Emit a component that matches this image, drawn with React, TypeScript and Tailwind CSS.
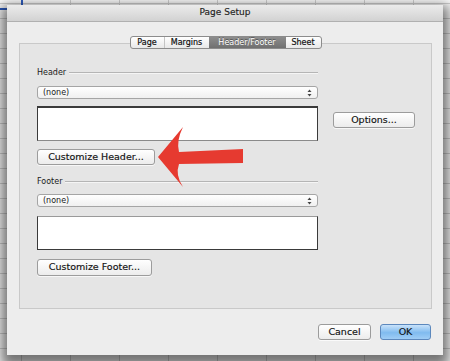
import React from "react"

const font = { fontFamily: '"DejaVu Sans", "Liberation Sans", sans-serif' }

function Button({ label, className = "" }: { label: string; className?: string }) {
  return (
    <div
      className={`flex h-[16px] items-center justify-center rounded-[3px] border border-[#9c9c9c] bg-[linear-gradient(to_bottom,#ffffff,#ececec)] text-[9.5px] text-[#111] [-webkit-text-stroke:0.15px_#111] shadow-[0_1px_0_rgba(255,255,255,0.7)] ${className}`}
    >
      {label}
    </div>
  )
}

function SelectBox() {
  return (
    <div className="flex h-[13px] w-[281px] items-center justify-between rounded-[3px] border border-[#a5a5a5] bg-[linear-gradient(to_bottom,#ffffff,#f0f0f0)] pl-[5px] pr-[5px]">
      <span className="text-[8px] leading-none text-[#1a1a1a]">(none)</span>
      <svg width="5" height="8" viewBox="0 0 5 8">
        <path d="M2.5 0.5 L4.5 3 L0.5 3 Z" fill="#444" />
        <path d="M2.5 7.5 L4.5 5 L0.5 5 Z" fill="#444" />
      </svg>
    </div>
  )
}

function SectionLabel({ label }: { label: string }) {
  return (
    <div className="flex h-[10px] w-[281px] items-center gap-[3px]">
      <span className="text-[8px] leading-none text-[#1a1a1a]">{label}</span>
      <div className="h-[2px] flex-1 border-t border-[#b5b5b5] bg-white/60" />
    </div>
  )
}

function Tabs() {
  const tabs = [
    { label: "Page", w: "w-[33px]" },
    { label: "Margins", w: "w-[45px]" },
    { label: "Header/Footer", w: "w-[77px]", active: true },
    { label: "Sheet", w: "w-[35px]" },
  ]
  return (
    <div className="relative z-10 flex h-[13px] overflow-hidden rounded-[3px] border border-[#8c8c8c] bg-[linear-gradient(to_bottom,#ffffff,#e8e8e8)]">
      {tabs.map((t, i) => (
        <div
          key={t.label}
          className={`flex items-center justify-center text-[8px] leading-none ${t.w} ${
            i > 0 && !t.active && !tabs[i - 1].active ? "border-l border-[#c4c4c4]" : ""
          } ${
            t.active
              ? "bg-[linear-gradient(to_bottom,#8d8d8d,#707070)] text-white [text-shadow:0_-1px_0_rgba(0,0,0,0.4)]"
              : "text-[#111] [-webkit-text-stroke:0.2px_#111]"
          }`}
        >
          {t.label}
        </div>
      ))}
    </div>
  )
}

export default function App() {
  return (
    <div
      className="relative h-[361px] w-[450px] overflow-hidden bg-white bg-[linear-gradient(to_right,#d4d4d4_1px,transparent_1px),linear-gradient(to_bottom,#d4d4d4_1px,transparent_1px)] bg-[length:49px_15px] bg-[position:21px_3px]"
      style={font}
    >
      {/* selected cell */}
      <div className="absolute left-[-30px] top-[-20px] h-[30px] w-[53px] border-b-2 border-r-2 border-[#2f5fc4]" />

      {/* dialog window */}
      <div className="absolute left-[7px] top-[5px] flex h-[350px] w-[436px] flex-col bg-[#ededed] shadow-[0_6px_12px_6px_rgba(0,0,0,0.55)]">
        <div className="flex h-[17px] items-center justify-center border-b border-[#b0b0b0] bg-[linear-gradient(to_bottom,#ebebeb,#d2d2d2)] text-[9px] text-[#222] [-webkit-text-stroke:0.15px_#222]">
          Page Setup
        </div>

        <div className="flex flex-col px-[12px] pt-[14px]">
          <div className="flex justify-center pl-[1px]">
            <Tabs />
          </div>

          <div className="-mt-[6px] flex h-[266px] w-[413px] flex-col border border-[#c9c9c9] bg-[#e5e5e5] pl-[17px] pt-[24px]">
            <SectionLabel label="Header" />
            <div className="mt-[8px]">
              <SelectBox />
            </div>
            <div className="mt-[7px] flex items-start gap-[15px]">
              <div className="h-[35px] w-[281px] border border-[#3a3a3a] border-t-2 border-b-[#8a8a8a] bg-white" />
              <Button label="Options..." className="mt-[6px] w-[82px]" />
            </div>
            <Button label="Customize Header..." className="mt-[8px] w-[118px]" />

            <div className="mt-[12px]">
              <SectionLabel label="Footer" />
            </div>
            <div className="mt-[7px]">
              <SelectBox />
            </div>
            <div className="mt-[9px] h-[34px] w-[281px] border border-[#3a3a3a] border-t-[#9a9a9a] bg-white" />
            <Button label="Customize Footer..." className="mt-[9px] h-[17px] w-[115px]" />
          </div>

          <div className="mt-[15px] flex justify-end gap-[9px]">
            <Button label="Cancel" className="w-[53px]" />
            <div className="flex h-[16px] w-[51px] items-center justify-center rounded-[3px] border border-[#5c88bd] bg-[linear-gradient(to_bottom,#c9e2fa,#80bbef_55%,#9fcdf6)] text-[9.5px] text-[#111] [-webkit-text-stroke:0.15px_#111]">
              OK
            </div>
          </div>
        </div>
      </div>

      {/* annotation arrow */}
      <svg className="pointer-events-none absolute left-0 top-0" width="450" height="361" viewBox="0 0 450 361">
        <path
          d="M158 157 L183 127 Q176 141 179 152 L243 149 L243 163 L179 164 Q175 175 183 187 Z"
          fill="#e63a30"
        />
      </svg>
    </div>
  )
}
